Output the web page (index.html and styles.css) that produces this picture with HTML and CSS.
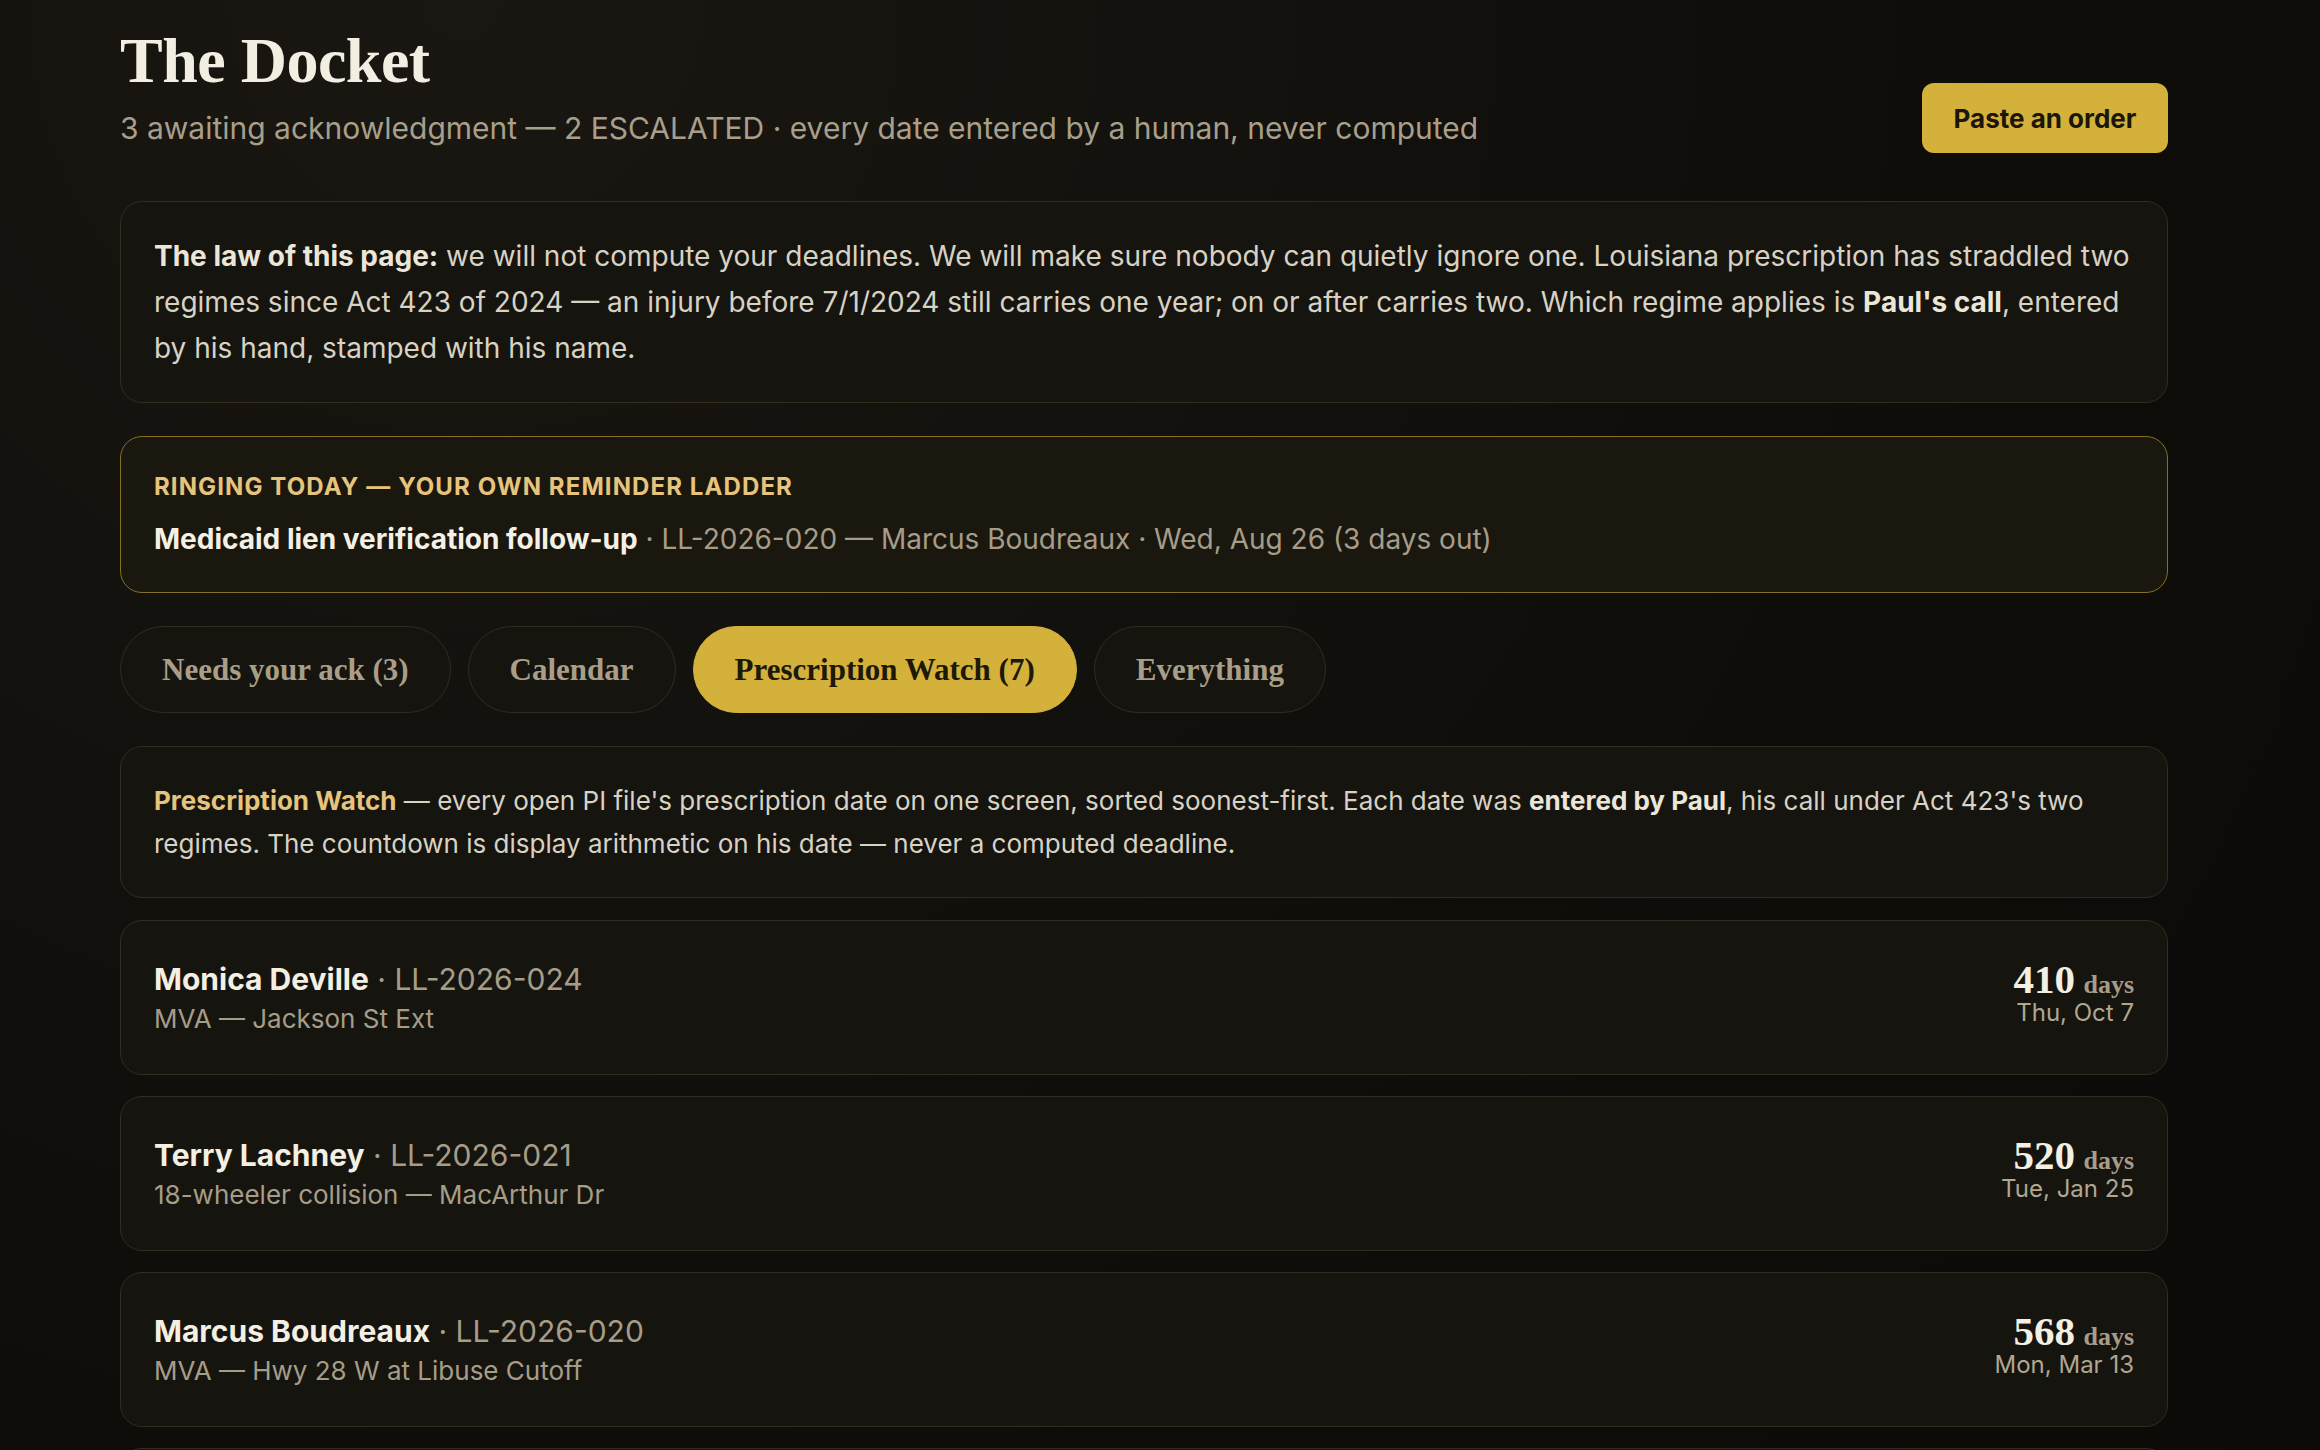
FILE: index.html
```html
<!DOCTYPE html>
<html lang="en">
<head>
<meta charset="UTF-8">
<meta name="viewport" content="width=device-width, initial-scale=1.0">
<title>The Docket</title>
<link rel="stylesheet" href="styles.css">
</head>
<body>

<div class="page">
  <header class="top">
    <div class="top-text">
      <h1 class="title">The Docket</h1>
      <p class="tagline">3 awaiting acknowledgment — 2 ESCALATED · every date entered by a human, never computed</p>
    </div>
    <button class="paste">Paste an order</button>
  </header>

  <section class="panel law">
    <p><b>The law of this page:</b> we will not compute your deadlines. We will make sure nobody can quietly ignore one. Louisiana prescription has straddled two regimes since Act 423 of 2024 — an injury before 7/1/2024 still carries one year; on or after carries two. Which regime applies is <b>Paul's call</b>, entered by his hand, stamped with his name.</p>
  </section>

  <section class="panel ringing">
    <div class="ringing-label">RINGING TODAY — YOUR OWN REMINDER LADDER</div>
    <div class="ringing-item"><b>Medicaid lien verification follow-up</b> <span class="muted">· LL-2026-020 — Marcus Boudreaux · Wed, Aug 26 (3 days out)</span></div>
  </section>

  <nav class="tabs">
    <button class="tab">Needs your ack (3)</button>
    <button class="tab">Calendar</button>
    <button class="tab active">Prescription Watch (7)</button>
    <button class="tab">Everything</button>
  </nav>

  <section class="panel intro">
    <p><span class="gold">Prescription Watch</span> — every open PI file's prescription date on one screen, sorted soonest-first. Each date was <b>entered by Paul</b>, his call under Act 423's two regimes. The countdown is display arithmetic on his date — never a computed deadline.</p>
  </section>

  <div class="cases">
    <div class="case">
      <div class="case-info">
        <div class="case-name"><b>Monica Deville</b> <span class="muted">· LL-2026-024</span></div>
        <div class="case-desc">MVA — Jackson St Ext</div>
      </div>
      <div class="case-count">
        <div class="days"><span class="num">410</span> <span class="unit">days</span></div>
        <div class="date">Thu, Oct 7</div>
      </div>
    </div>
    <div class="case">
      <div class="case-info">
        <div class="case-name"><b>Terry Lachney</b> <span class="muted">· LL-2026-021</span></div>
        <div class="case-desc">18-wheeler collision — MacArthur Dr</div>
      </div>
      <div class="case-count">
        <div class="days"><span class="num">520</span> <span class="unit">days</span></div>
        <div class="date">Tue, Jan 25</div>
      </div>
    </div>
    <div class="case">
      <div class="case-info">
        <div class="case-name"><b>Marcus Boudreaux</b> <span class="muted">· LL-2026-020</span></div>
        <div class="case-desc">MVA — Hwy 28 W at Libuse Cutoff</div>
      </div>
      <div class="case-count">
        <div class="days"><span class="num">568</span> <span class="unit">days</span></div>
        <div class="date">Mon, Mar 13</div>
      </div>
    </div>
    <div class="case">
      <div class="case-info">
        <div class="case-name"><b>Denise Fontenot</b> <span class="muted">· LL-2026-018</span></div>
        <div class="case-desc">Slip and fall — Alexandria Mall</div>
      </div>
      <div class="case-count">
        <div class="days"><span class="num">601</span> <span class="unit">days</span></div>
        <div class="date">Sat, Apr 15</div>
      </div>
    </div>
    <div class="case">
      <div class="case-info">
        <div class="case-name"><b>Ray Guillory</b> <span class="muted">· LL-2026-015</span></div>
        <div class="case-desc">Dog bite — Masonic Dr</div>
      </div>
      <div class="case-count">
        <div class="days"><span class="num">644</span> <span class="unit">days</span></div>
        <div class="date">Sun, May 28</div>
      </div>
    </div>
  </div>
</div>

</body>
</html>
```

FILE: styles.css
```css
body {
  margin: 0;
  padding: 0;
  font-family: Inter, "Noto Sans", sans-serif;
  color: #d9d3c5;
  background-color: #0d0c0a;
  background-image: radial-gradient(ellipse at 20% 0%, #1a1712 0%, #0e0d0a 55%, #0b0a08 100%);
  min-height: 100vh;
}

.page {
  width: 2048px;
  margin-left: 120px;
  padding-top: 28px;
  padding-bottom: 60px;
}

.top {
  display: flex;
  justify-content: space-between;
  align-items: flex-end;
  margin-bottom: 53px;
}

.title {
  font-family: "Liberation Serif", serif;
  font-weight: bold;
  font-size: 64px;
  line-height: 66px;
  margin: 0;
  color: #f3eee2;
  letter-spacing: -0.5px;
}

.tagline {
  margin: 15px 0 0 0;
  font-size: 30px;
  line-height: 39px;
  color: #a89f8b;
}

.paste {
  font-family: Inter, sans-serif;
  font-weight: 700;
  font-size: 26px;
  color: #1b1607;
  background-color: #d4b13a;
  border: none;
  border-radius: 12px;
  width: 246px;
  height: 70px;
  margin-bottom: -5px;
  cursor: pointer;
}

.panel {
  background-color: #16140f;
  border: 1px solid #332d20;
  border-radius: 22px;
  padding: 32px 33px;
  margin-bottom: 33px;
}

.panel p {
  margin: 0;
}

.law {
  font-size: 28px;
  line-height: 46px;
  color: #d8d2c4;
  padding: 31px 33px;
}

.law b,
.intro b {
  color: #ece6d8;
}

.ringing {
  background-color: #1a170f;
  border-color: #857028;
  padding: 34px 33px 33px;
}

.ringing-label {
  font-size: 24px;
  font-weight: 700;
  line-height: 32px;
  letter-spacing: 1.1px;
  color: #e6c47c;
  margin-bottom: 16px;
}

.ringing-item {
  font-size: 28px;
  line-height: 40px;
}

.ringing-item b {
  color: #f5f0e4;
}

.muted {
  color: #a69d88;
  font-weight: 400;
}

.tabs {
  display: flex;
  gap: 17px;
  margin-bottom: 33px;
}

.tab {
  font-family: "Liberation Serif", serif;
  font-weight: bold;
  font-size: 31px;
  height: 87px;
  padding: 0 41px;
  border-radius: 44px;
  background-color: #16140f;
  border: 1.5px solid #322c1f;
  color: #a99e87;
  cursor: pointer;
}

.tab.active {
  background-color: #d4b13a;
  border-color: #d4b13a;
  color: #1d1808;
}

.intro {
  font-size: 26px;
  line-height: 43px;
  color: #d8d2c4;
  margin-bottom: 22px;
}

.gold {
  color: #e6c47c;
  font-weight: 700;
}

.cases {
  display: flex;
  flex-direction: column;
  gap: 21px;
}

.case {
  display: flex;
  justify-content: space-between;
  align-items: center;
  box-sizing: border-box;
  height: 155px;
  background-color: #16140f;
  border: 1px solid #332d20;
  border-radius: 22px;
  padding: 0 33px;
}

.case-name {
  font-size: 30px;
  line-height: 38px;
}

.case-name b {
  color: #f4efe3;
}

.case-desc {
  font-size: 26px;
  line-height: 34px;
  margin-top: 4px;
  color: #a69d88;
}

.case-count {
  text-align: right;
  margin-bottom: 8px;
}

.days {
  height: 38px;
  line-height: 38px;
}

.num {
  font-family: "Liberation Serif", serif;
  font-weight: bold;
  font-size: 41px;
  color: #f4efe3;
}

.unit {
  font-family: "Liberation Serif", serif;
  font-weight: bold;
  font-size: 26px;
  color: #a69d88;
  margin-left: 4px;
}

.date {
  font-size: 24px;
  line-height: 30px;
  color: #b0a791;
}
```
